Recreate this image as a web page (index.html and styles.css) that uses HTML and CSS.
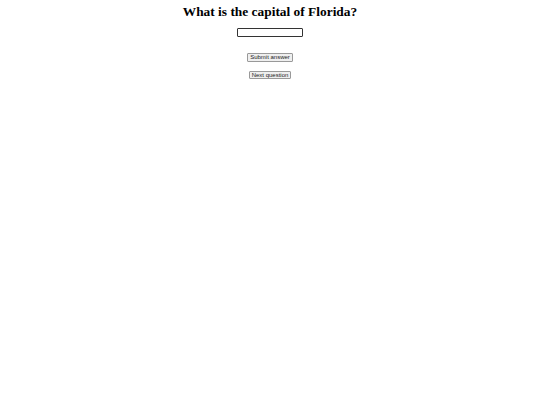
FILE: index.html
```html
<!DOCTYPE html>
<html>
<head>
<meta charset="utf-8">
<link rel="stylesheet" href="styles.css">
</head>
<body>
<div class="quiz">
  <h1 class="question">What is the capital of Florida?</h1>
  <input class="answer" type="text">
  <button class="btn btn-submit">Submit answer</button>
  <button class="btn btn-next">Next question</button>
</div>
</body>
</html>
```
FILE: styles.css
```css
html, body {
  margin: 0;
  padding: 0;
  background: #fff;
}
.quiz {
  display: flex;
  flex-direction: column;
  align-items: center;
}
.question {
  font-family: "Liberation Serif", "Times New Roman", serif;
  font-weight: bold;
  font-size: 13.4px;
  line-height: 15px;
  margin: 4px 0 0 0;
  color: #000;
}
.answer {
  box-sizing: border-box;
  width: 66px;
  height: 9px;
  margin: 9px 0 0 0;
  padding: 0;
  border: 1px solid #333;
  border-radius: 1px;
  background: #fff;
}
.btn {
  box-sizing: border-box;
  font-family: "Liberation Sans", Arial, sans-serif;
  font-size: 6px;
  line-height: 6px;
  height: 8.5px;
  padding: 0 2px;
  margin: 0;
  border: 1px solid #999;
  border-radius: 1px;
  background: #efefef;
  color: #222;
}
.btn-submit {
  margin-top: 16px;
}
.btn-next {
  margin-top: 9px;
}
```
